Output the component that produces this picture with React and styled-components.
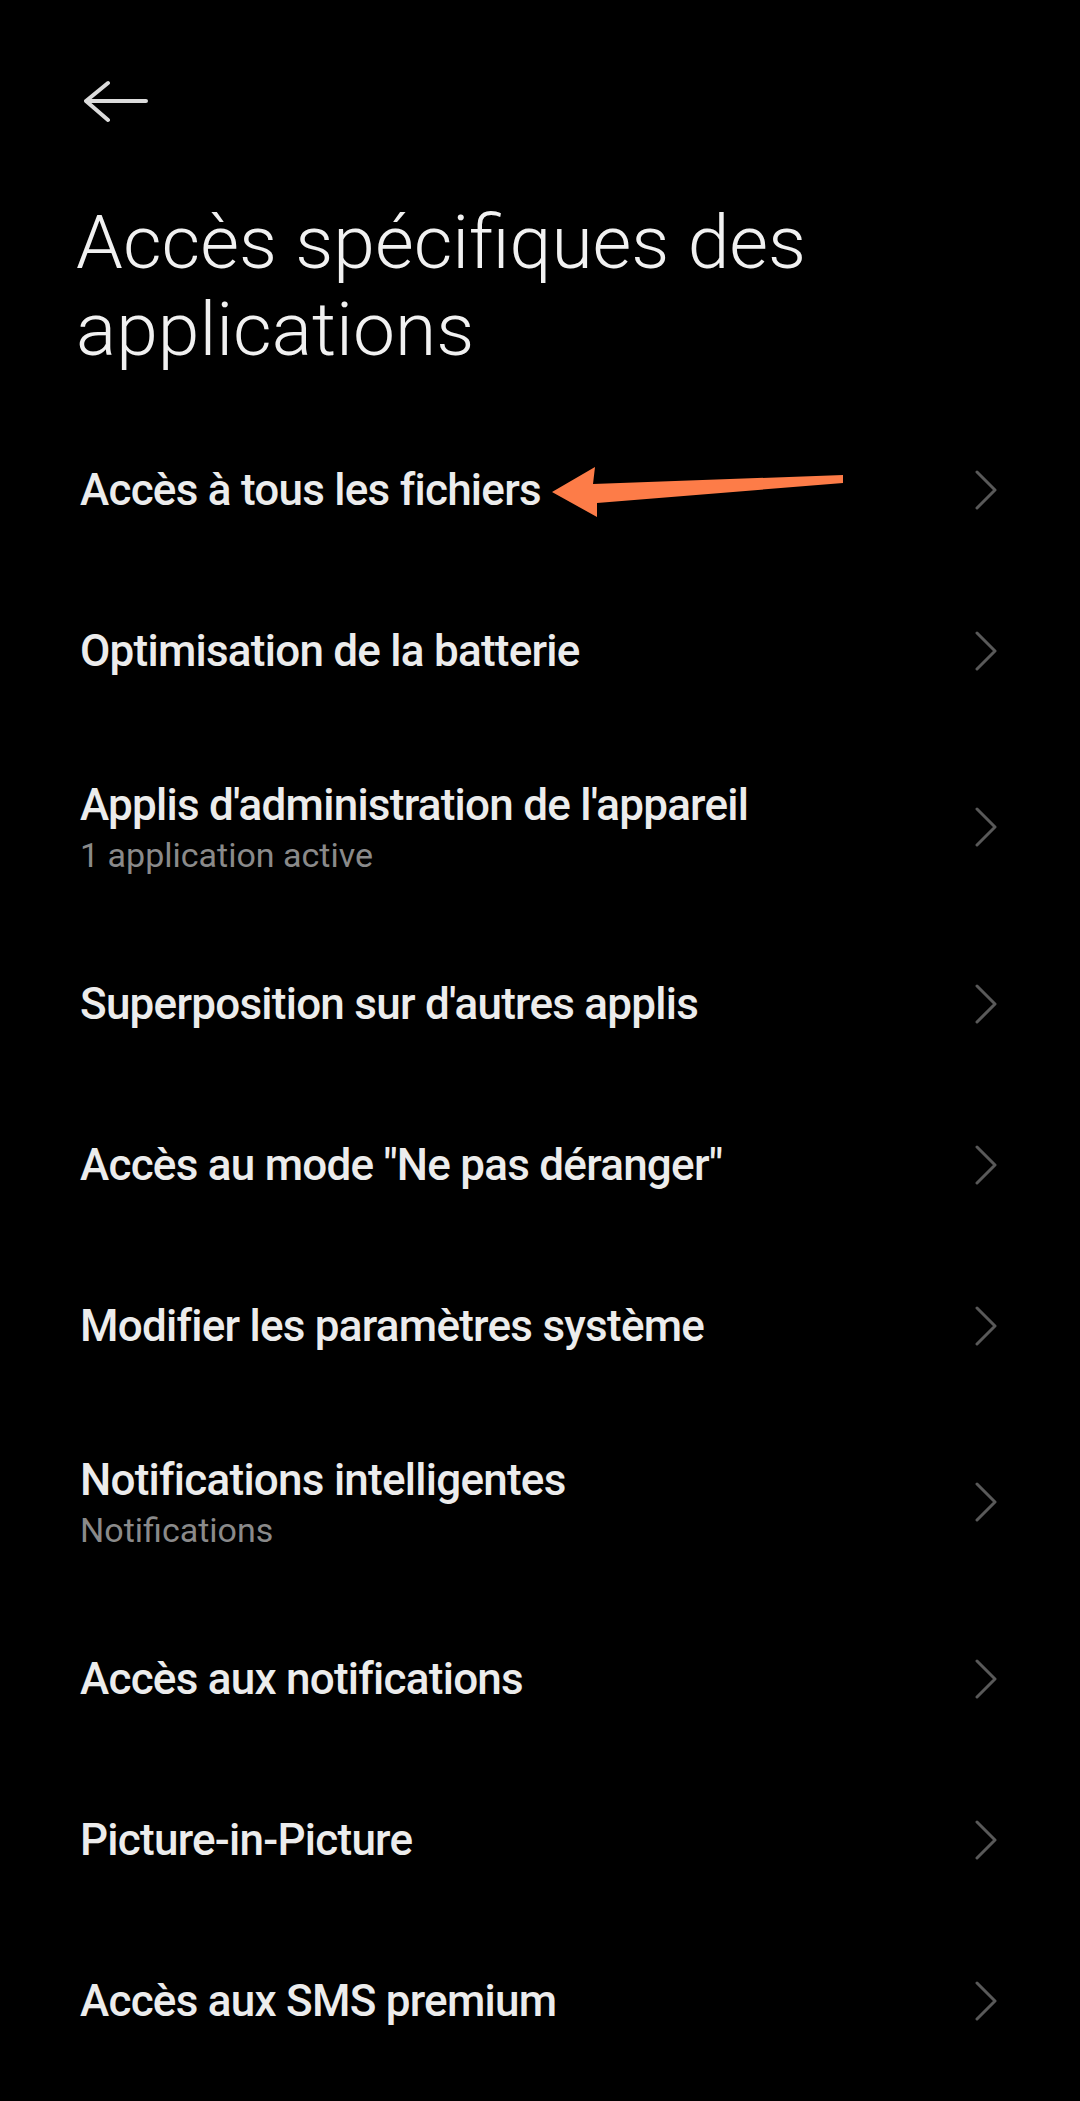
import styled, { createGlobalStyle } from "styled-components";

const GlobalStyle = createGlobalStyle`
  html, body {
    margin: 0;
    padding: 0;
    background: #000;
  }
  body {
    font-family: Roboto, "Noto Sans", "Liberation Sans", sans-serif;
    -webkit-font-smoothing: antialiased;
  }
`;

const Page = styled.div`
  position: relative;
  width: 1080px;
  min-height: 2101px;
  background: #000;
  overflow: hidden;
`;

const Header = styled.header`
  display: flex;
  align-items: center;
  height: 60px;
  padding: 71px 0 0 84px;
`;

const BackButton = styled.button`
  display: flex;
  align-items: center;
  justify-content: center;
  width: 64px;
  height: 60px;
  padding: 0;
  border: none;
  background: transparent;
  cursor: pointer;
`;

const Title = styled.h1`
  margin: 68px 0 0;
  padding: 0 60px 0 76px;
  font-size: 75px;
  font-weight: 300;
  line-height: 87px;
  color: #f1f1f1;
  letter-spacing: 0;
`;

const List = styled.ul`
  list-style: none;
  margin: 36px 0 0;
  padding: 0;
`;

const Row = styled.li`
  display: flex;
  align-items: center;
  justify-content: space-between;
  height: ${(p) => (p.$tall ? 192 : 161)}px;
  padding: 0 83px 0 80px;
  box-sizing: border-box;
  cursor: pointer;
`;

const TextBlock = styled.div`
  display: flex;
  flex-direction: column;
  gap: 3px;
`;

const Label = styled.span`
  font-size: 44px;
  font-weight: 500;
  line-height: 52px;
  letter-spacing: -0.75px;
  color: #ececec;
`;

const Sub = styled.span`
  font-size: 34px;
  font-weight: 400;
  line-height: 42px;
  color: #8a8a8a;
`;

const Chevron = styled.svg`
  flex: none;
  width: 22px;
  height: 40px;
`;

const Pointer = styled.svg`
  position: absolute;
  left: 540px;
  top: 455px;
  width: 320px;
  height: 75px;
  pointer-events: none;
`;

const items = [
  { label: "Accès à tous les fichiers" },
  { label: "Optimisation de la batterie" },
  { label: "Applis d'administration de l'appareil", sub: "1 application active" },
  { label: "Superposition sur d'autres applis" },
  { label: 'Accès au mode "Ne pas déranger"' },
  { label: "Modifier les paramètres système" },
  { label: "Notifications intelligentes", sub: "Notifications" },
  { label: "Accès aux notifications" },
  { label: "Picture-in-Picture" },
  { label: "Accès aux SMS premium" },
];

const App = () => {
  return (
    <>
      <GlobalStyle />
      <Page>
        <Header>
          <BackButton aria-label="Retour">
            <svg width="64" height="60" viewBox="0 0 64 60" fill="none">
              <path
                d="M24 12 L2 30 L24 49 M2 30 H62"
                stroke="#dcdcdc"
                strokeWidth="4"
                strokeLinecap="round"
                strokeLinejoin="round"
              />
            </svg>
          </BackButton>
        </Header>
        <Title>Accès spécifiques des applications</Title>
        <List>
          {items.map((item) => (
            <Row key={item.label} $tall={!!item.sub}>
              <TextBlock>
                <Label>{item.label}</Label>
                {item.sub && <Sub>{item.sub}</Sub>}
              </TextBlock>
              <Chevron viewBox="0 0 22 40" fill="none">
                <path
                  d="M2 2 L20 20 L2 38"
                  stroke="#595959"
                  strokeWidth="3"
                  strokeLinecap="round"
                  strokeLinejoin="round"
                />
              </Chevron>
            </Row>
          ))}
        </List>
        <Pointer viewBox="0 0 320 75">
          <polygon
            points="12,37 55,12 53,29 303,20 303,28 57,48 57,62"
            fill="#fd7c48"
          />
        </Pointer>
      </Page>
    </>
  );
};

export default App;
